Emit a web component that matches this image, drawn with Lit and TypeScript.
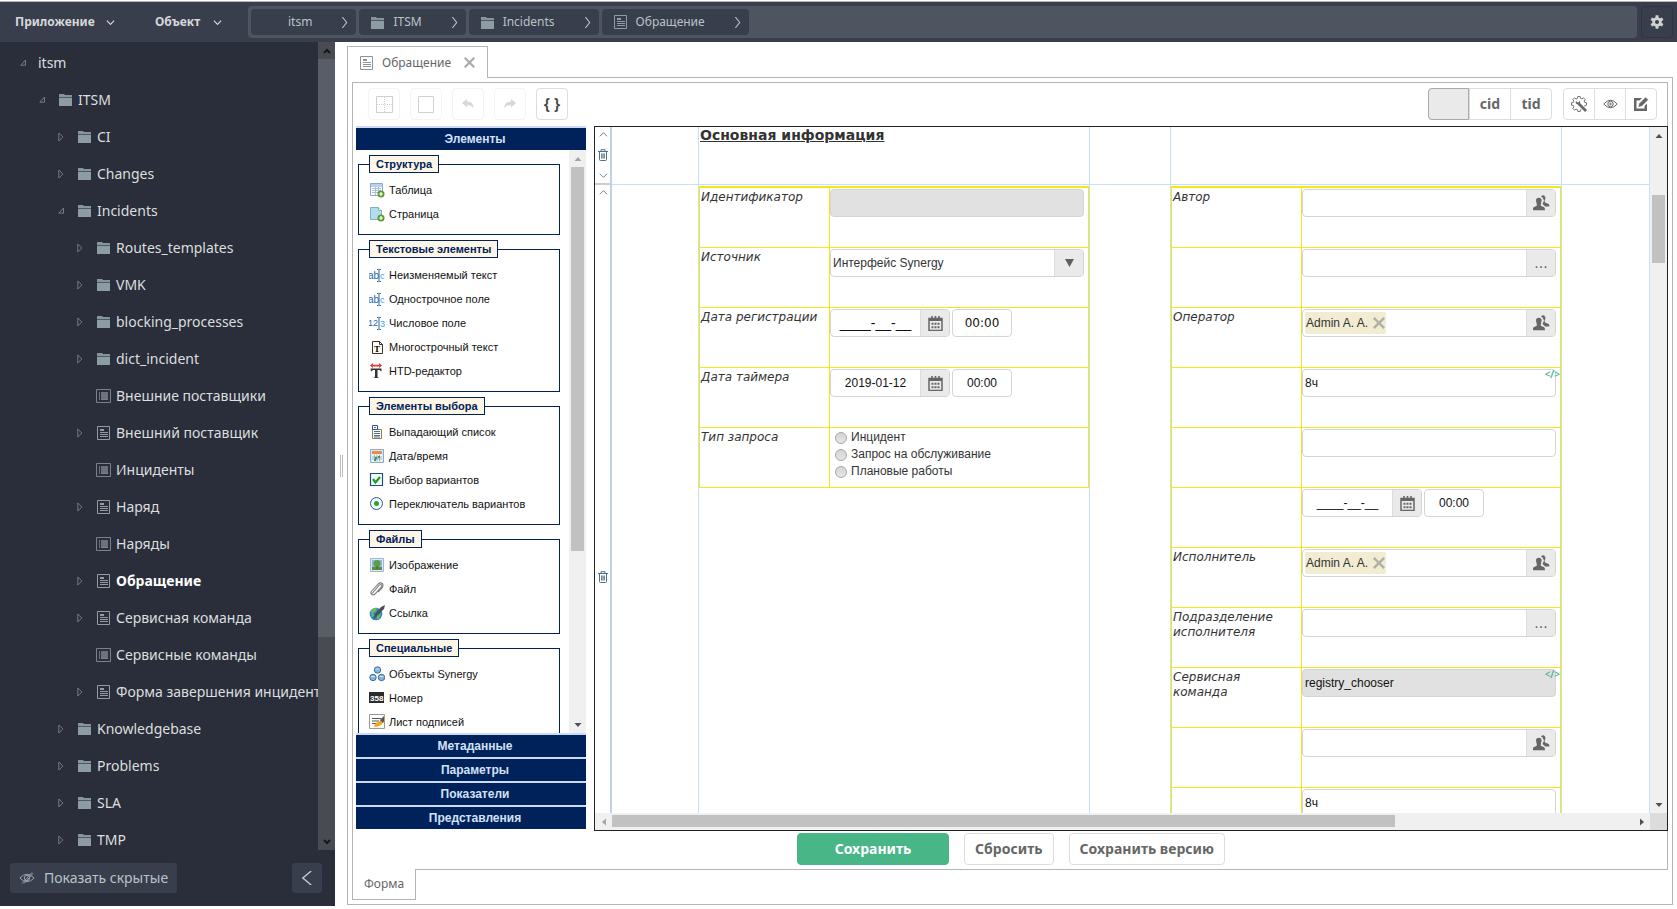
import { LitElement, html, svg, css, nothing, TemplateResult } from "lit";
import { customElement } from "lit/decorators.js";
import { classMap } from "lit/directives/class-map.js";

type TreeKind = "root" | "folder" | "form" | "list";
interface TreeNode { label: string; depth: number; kind: TreeKind; open?: boolean; leaf?: boolean; current?: boolean; }
type Control = "disabled" | "select" | "dateWide" | "date" | "dateEmpty" | "radios" | "user" | "userChip" | "more" | "code" | "text" | "codeDisabled";
interface FormRow { label: string; control: Control; value?: string; }

/** Outline of a cog wheel centred on (c, c). */
const cog = (teeth: number, outer: number, inner: number, c: number) => {
  const step = (Math.PI * 2) / teeth;
  const at = (r: number, a: number) => `${(c + r * Math.cos(a)).toFixed(2)} ${(c + r * Math.sin(a)).toFixed(2)}`;
  return Array.from({ length: teeth }, (_, i) => {
    const a = i * step - Math.PI / 2;
    return `${i ? "L" : "M"}${at(inner, a - step * 0.32)}L${at(outer, a - step * 0.2)}L${at(outer, a + step * 0.2)}L${at(inner, a + step * 0.32)}`;
  }).join("") + "z";
};

const folderIcon = html`<svg class="ico" width="14" height="13" viewBox="0 0 14 13"><path d="M0 1h5l1 1h7v2H0z" fill="#86959b"/><path d="M0 4.500h13V13H0z" fill="#8d9ca2"/><path d="M0 4h13v1H0z" fill="#4d5a62"/></svg>`;
const formIcon = (c: string) => html`<svg class="ico" width="14" height="14" viewBox="0 0 14 14" fill="none" stroke=${c}><path d="M.5.5h12v13H.5z"/><path d="M3 3.500h4M3 4.500h4M3 6.500h8M3 8.500h8M3 10.500h8"/></svg>`;
const listIcon = html`<svg class="ico" width="16" height="14" viewBox="0 0 16 14"><path d="M.5.5h14v13H.5z" fill="none" stroke="#7a818b"/><path d="M3 3h1v8H3zM5 3h7v7H5z" fill="#6b727d"/><path d="M5 10.500h7" stroke="#7a818b"/></svg>`;
const chevron = (dir: "down" | "right" | "left" | "up", w = 8, sw = 1) => {
  const d = { down: "M1 3l4 4 4-4", up: "M1 7l4-4 4 4", right: "M3 0l4 5-4 5", left: "M8 0L2 5l6 5" }[dir];
  return html`<svg width=${w} height=${w} viewBox="0 0 10 10" fill="none" stroke="currentColor" stroke-width=${sw}><path d=${d}/></svg>`;
};
const toggleClosed = html`<svg width="6" height="10" viewBox="0 0 6 10"><path d="M.8 1l4 4-4 4z" fill="none" stroke="#737b88"/></svg>`;
const toggleOpen = html`<svg width="7" height="7" viewBox="0 0 7 7"><path d="M5.500 1v5.200H.8z" fill="none" stroke="#737b88"/></svg>`;
const cross = (s: number, c: string) => html`<svg width=${s} height=${s} viewBox="0 0 10 10" stroke=${c} stroke-width="2"><path d="M.7.7l8.600 8.600M9.300.7L.7 9.300"/></svg>`;
const gear = html`<svg width="14" height="14" viewBox="0 0 14 14"><path d=${cog(6, 6.8, 4.8, 7) + "M9 7A2 2 0 1 0 5 7 2 2 0 1 0 9 7z"} fill="#d0d0d0" fill-rule="evenodd"/></svg>`;
const trash = html`<svg width="10" height="12" viewBox="0 0 10 12" fill="none" stroke="#4f7187"><path d="M0 2.500h10M3 2V.7h4V2M1.500 3v7.500q0 1 1 1h5q1 0 1-1V3M3.700 4.500v5M5 4.500v5M6.300 4.500v5"/></svg>`;
const eye = html`<svg width="15" height="10" viewBox="0 0 15 10" fill="none" stroke="#666"><path d="M.8 5Q7.500-2.600 14.200 5 7.500 12.600.8 5z"/><circle cx="7.500" cy="5" r="2.700"/><circle cx="7.500" cy="5" r=".8"/></svg>`;
const eyeOff = html`<svg width="16" height="12" viewBox="0 0 16 12" fill="none" stroke="#9aa1ab"><path d="M.8 6Q8-1.500 15.200 6 8 13.500.8 6zM3 11.500L13 .5M5 11.500L14 1.500"/><circle cx="8" cy="6" r="2.700"/></svg>`;
const toolGear = html`<svg width="17" height="17" viewBox="0 0 17 17" fill="none" stroke="#666"><path d=${cog(8, 7.6, 5.9, 8)} stroke-width=".9"/><path d="M8.500 8.500l6.500 6.500" stroke="#fff" stroke-width="4.500"/><path d="M7.500 7.500l7.500 7.500" stroke-width="2.600"/><path d="M5 4.800q-1 2.400.6 3.200 2 .8 3.200-.4 1-1.500-.1-3.100L8 6.200H6z" fill="#666" stroke="none"/></svg>`;
const editIcon = html`<svg width="15" height="14" viewBox="0 0 15 14"><path d="M0 1h8L5.500 3.500h-3v8h8V9L13 6.500V14H0z" fill="#666"/><path d="M4 10.500l1-4L11.500 0l3 2.700L8 9.300z" fill="#666" stroke="#fff" stroke-width=".6"/></svg>`;
const people = html`<svg width="17" height="16" viewBox="0 0 17 16" fill="#666"><path d="M8 1.500Q10-.8 12 1.500q1 2-.5 4.500l.6 1.600 3.500 1.500q1 1 .7 2.400h-4L9.500 9 11 5.500 9.500 2.500z"/><path d="M3 5.500Q3 2.800 5.800 2.800T8.600 5.500L7.800 9.500v1.300l3.400 1.500q.8.600.8 3H-.3q0-2.400.9-3l3.200-1.500V9.500z"/></svg>`;
const calendar = html`<svg width="15" height="15" viewBox="0 0 15 15"><path d="M1 2.500h13v12H1z" fill="none" stroke="#666" stroke-width="1.500"/><path d="M1 2h13v3H1z" fill="#666"/><path d="M4 0v3.500M11 0v3.500M7.500 0v3" stroke="#666" stroke-width="1.600"/><path d="M3.500 7.800h8M3.500 11.300h8" stroke="#666" stroke-width="2" stroke-dasharray="2 1"/></svg>`;

const plus = svg`<circle cx="12" cy="12" r="3.500" fill="#5c9a2c"/><path d="M12 10v4M10 12h4" stroke="#fff" stroke-width="1.200"/>`;
const pic = (body: TemplateResult) => html`<svg width="16" height="16" viewBox="0 0 16 16" font-family="Liberation Sans, sans-serif">${body}</svg>`;
const icons: Record<string, TemplateResult> = {
  table: pic(svg`<path d="M1.500 1.500h12v12h-12z" fill="#fff" stroke="#86a8d8"/><path d="M2 2h11v3H2z" fill="#b9d1f0"/><path d="M3 6.500h9M3 8.500h9M3 10.500h9M6.500 5v8M9.500 5v8" stroke="#a9bfdd"/>${plus}`),
  page: pic(svg`<path d="M1.500 1.500h8l3 3v9h-11z" fill="#b5dcea" stroke="#7ab3cc"/><path d="M9.500 1.500v3h3" fill="#fff" stroke="#7ab3cc"/>${plus}`),
  abc: pic(svg`<text x="-1" y="12" font-size="10" fill="#2a64ad">ab</text><path d="M8 2.500h1.500l.5.500.5-.5H12M8 14.500h1.500l.5-.5.5.5H12M10 3v11" fill="none" stroke="#2d6a9c"/><text x="11" y="12" font-size="9" fill="#37a3ee">c</text>`),
  num: pic(svg`<text x="-1" y="11" font-size="9" fill="#2a64ad">12</text><path d="M8 2.500h1.500l.5.500.5-.5H12M8 14.500h1.500l.5-.5.5.5H12M10 3v11" fill="none" stroke="#2d6a9c"/><text x="11" y="12" font-size="9" fill="#37a3ee">3</text>`),
  multi: pic(svg`<path d="M3.500 2.500h7l3 3v9h-10z" fill="#fffdf2" stroke="#333"/><path d="M10.500 2.500v3h3" fill="none" stroke="#333"/><text x="5" y="12.500" font-size="9" font-weight="bold" font-family="Liberation Serif, serif">T</text>`),
  htd: pic(svg`<path d="M1 2.500L4 0v1.700h6V0l3 2.500L10 5V3.500H4V5z" fill="#e53a32"/><path d="M1.500 5.500h11v3l-2-1.500H8.500v7l1.500 1H4.500l1.500-1V7h-2l-2 1.500z" fill="#333"/>`),
  drop: pic(svg`<path d="M3.500 5.500h9v9h-9z" fill="#fffbe8" stroke="#8c7f56"/><path d="M3.500 1.500h5v4h-5z" fill="#fff" stroke="#33527e"/><path d="M5 3.500h2M5 7.500h6M5 9.500h6M5 11.500h6M5 13h6" stroke="#4a6da0"/>`),
  date: pic(svg`<path d="M1.500 1.500h13v13h-13z" fill="#dbe8f6" stroke="#8aabd6"/><path d="M3 3h10v3H3z" fill="#f08a45"/><path d="M3 7h10v6H3z" fill="#fff"/><path d="M3 9h10M3 11h10M5.500 7v6M8 7v6M10.500 7v6" stroke="#9ab"/><path d="M6 9h2v2H6zM9 8h2v2H9zM5 11h2v2H5z" fill="#3f9a4b"/>`),
  check: pic(svg`<path d="M1.500 1.500h12v12h-12z" fill="#f6fbff" stroke="#1d4f7c" stroke-width="1.200"/><path d="M4 7l2.500 3.500L11 5" fill="none" stroke="#17a017" stroke-width="2.200"/>`),
  radio: pic(svg`<circle cx="7.500" cy="7.500" r="6" fill="#f3faff" stroke="#2d5d86"/><circle cx="7.500" cy="7.500" r="2.500" fill="#2aa52a"/>`),
  image: pic(svg`<path d="M1.500 1.500h13v13h-13z" fill="#dfe8f4" stroke="#9eb7d8"/><path d="M3 3h10v10H3z" fill="#8db9ea"/><path d="M3 10h10v3H3z" fill="#57903c"/><circle cx="8" cy="6.500" r="3.500" fill="#5f9e3e"/><path d="M7.500 9h1v3h-1z" fill="#6b4d2c"/>`),
  file: pic(svg`<path d="M3 12.500L10.500 4q1.500-1 2.300.2.600 1-.5 2L6 13q-2 1.600-3.500.3-1.400-1.500.2-3.300L9.500 2.700q2-1.600 4 0 1.500 1.800 0 3.600L9 11" fill="none" stroke="#7d7d7d" stroke-width="1.100"/>`),
  link: pic(svg`<circle cx="7" cy="9" r="6.300" fill="#2c86dc"/><path d="M2 6q3-4 6-3l-1 3-3 2 1 3-2 1zM8 10l4-1-2 5-2 .5z" fill="#6cc04a"/><path d="M4 15L6 9 12 2l4-2-1 4-6 6z" fill="#4c4f54"/>`),
  objects: pic(svg`<g fill="#86b5db" stroke="#3a6e9c"><circle cx="8.500" cy="4" r="3.200"/><circle cx="4" cy="11.500" r="3.200"/><circle cx="12.500" cy="11.500" r="3.200"/></g><path d="M6.500 3h4M2 10.500h4M10.500 10.500h4" stroke="#cfe3f3"/>`),
  number: pic(svg`<path d="M0 2h15v11H0z" fill="#2b2b2b"/><text x="1" y="11" font-size="8" font-weight="bold" fill="#fff">358</text>`),
  sign: pic(svg`<path d="M.5.5h15v14H.5z" fill="#fff" stroke="#9a9a9a"/><path d="M3 4.500h9M3 7h7M3 9.500h5" stroke="#555"/><path d="M5 13q1-5 5-5l3-4 2.500-2v5L12 11q-3 2-7 2z" fill="#f2a71b"/><path d="M11 6l4-4v5l-1 2z" fill="#555"/>`),
};

const tree: TreeNode[] = [
  { label: "itsm", depth: 0, kind: "root", open: true },
  { label: "ITSM", depth: 1, kind: "folder", open: true },
  { label: "CI", depth: 2, kind: "folder" },
  { label: "Changes", depth: 2, kind: "folder" },
  { label: "Incidents", depth: 2, kind: "folder", open: true },
  { label: "Routes_templates", depth: 3, kind: "folder" },
  { label: "VMK", depth: 3, kind: "folder" },
  { label: "blocking_processes", depth: 3, kind: "folder" },
  { label: "dict_incident", depth: 3, kind: "folder" },
  { label: "Внешние поставщики", depth: 3, kind: "list", leaf: true },
  { label: "Внешний поставщик", depth: 3, kind: "form" },
  { label: "Инциденты", depth: 3, kind: "list", leaf: true },
  { label: "Наряд", depth: 3, kind: "form" },
  { label: "Наряды", depth: 3, kind: "list", leaf: true },
  { label: "Обращение", depth: 3, kind: "form", current: true },
  { label: "Сервисная команда", depth: 3, kind: "form" },
  { label: "Сервисные команды", depth: 3, kind: "list", leaf: true },
  { label: "Форма завершения инцидента", depth: 3, kind: "form" },
  { label: "Knowledgebase", depth: 2, kind: "folder" },
  { label: "Problems", depth: 2, kind: "folder" },
  { label: "SLA", depth: 2, kind: "folder" },
  { label: "TMP", depth: 2, kind: "folder" },
];

const palette: { title: string; items: [string, string][] }[] = [
  { title: "Структура", items: [["table", "Таблица"], ["page", "Страница"]] },
  { title: "Текстовые элементы", items: [["abc", "Неизменяемый текст"], ["abc", "Однострочное поле"], ["num", "Числовое поле"], ["multi", "Многострочный текст"], ["htd", "HTD-редактор"]] },
  { title: "Элементы выбора", items: [["drop", "Выпадающий список"], ["date", "Дата/время"], ["check", "Выбор вариантов"], ["radio", "Переключатель вариантов"]] },
  { title: "Файлы", items: [["image", "Изображение"], ["file", "Файл"], ["link", "Ссылка"]] },
  { title: "Специальные", items: [["objects", "Объекты Synergy"], ["number", "Номер"], ["sign", "Лист подписей"]] },
];

const leftRows: FormRow[] = [
  { label: "Идентификатор", control: "disabled" },
  { label: "Источник", control: "select", value: "Интерфейс Synergy" },
  { label: "Дата регистрации", control: "dateWide" },
  { label: "Дата таймера", control: "date", value: "2019-01-12" },
  { label: "Тип запроса", control: "radios" },
];
const rightRows: FormRow[] = [
  { label: "Автор", control: "user" },
  { label: "", control: "more" },
  { label: "Оператор", control: "userChip", value: "Admin A. A." },
  { label: "", control: "code", value: "8ч" },
  { label: "", control: "text" },
  { label: "", control: "dateEmpty" },
  { label: "Исполнитель", control: "userChip", value: "Admin A. A." },
  { label: "Подразделение исполнителя", control: "more" },
  { label: "Сервисная команда", control: "codeDisabled", value: "registry_chooser" },
  { label: "", control: "user" },
  { label: "", control: "text", value: "8ч" },
];

const base = css`
  :host, *, *::before, *::after { box-sizing: border-box; }
  button, input, select { font: inherit; color: inherit; margin: 0; padding: 0; border: 0; background: none; }
  button { cursor: pointer; }
  svg { display: block; flex: none; }
`;

/** Decorative scroll bar: arrow, track with a thumb, arrow. */
@customElement("scroll-track")
class ScrollTrack extends LitElement {
  static properties = { start: { type: Number }, size: { type: Number }, horizontal: { type: Boolean, reflect: true }, dark: { type: Boolean, reflect: true }, attop: { type: Boolean } };
  declare start: number; declare size: number; declare horizontal: boolean; declare dark: boolean; declare attop: boolean;
  static styles = css`
    :host { display: flex; flex-direction: column; width: 17px; background: #f0f0f0; }
    :host([horizontal]) { flex-direction: row; width: auto; height: 17px; }
    :host([dark]) { background: #484b52; }
    .end { flex: none; width: 17px; height: 17px; display: grid; place-items: center; }
    .track { flex: 1; min-height: 0; position: relative; }
    .thumb { position: absolute; left: 2px; right: 2px; background: #c1c1c1; }
    :host([horizontal]) .thumb { left: auto; right: auto; top: 2px; bottom: 3px; }
    :host([dark]) .thumb { left: 0; right: 0; background: #585d67; }
    svg { display: block; }
  `;
  render() {
    const style = this.horizontal ? `left:${this.start}%;width:${this.size}%` : `top:${this.start}%;height:${this.size}%`;
    const mark = (d: string, c: string) => this.dark
      ? html`<svg width="8" height="8" viewBox="0 0 8 8" fill="none" stroke="#15171b" stroke-width="2"><path d=${d}/></svg>`
      : html`<svg width="8" height="8" viewBox="0 0 8 8" fill=${c}><path d=${d + "z"}/></svg>`;
    const a = this.dark ? "M1 6l3-3 3 3" : this.horizontal ? "M6 0.500v7L2 4" : "M0.500 6h7L4 2";
    const b = this.dark ? "M1 2l3 3 3-3" : this.horizontal ? "M2 0.500v7L6 4" : "M0.500 2h7L4 6";
    return html`<span class="end">${mark(a, this.attop ? "#a3a3a3" : "#505050")}</span>
      <span class="track"><span class="thumb" style=${style}></span></span>
      <span class="end">${mark(b, "#505050")}</span>`;
  }
}

/** Two-column form block placed in a cell of the designer sheet. */
@customElement("form-grid")
class FormGrid extends LitElement {
  static properties = { rows: { attribute: false }, prefix: { type: String } };
  declare rows: FormRow[]; declare prefix: string;
  static styles = [base, css`
    :host { display: block; border: 1px solid #f2ea12; border-top-width: 2px; font: 12px/15px "Liberation Sans", Arial, sans-serif; color: #333; }
    .row { display: grid; grid-template-columns: 130px minmax(0, 1fr); height: 60px; border-bottom: 1px solid #f2ea12; }
    .row:last-child { height: 59px; border-bottom: 0; }
    .name { border-right: 1px solid #f2ea12; padding: 2px 8px 0 1px; font: italic 12px/15px "DejaVu Sans", Verdana, sans-serif; }
    .value { position: relative; padding: 1px 4px 0 0; }
    .field { display: flex; height: 28px; border: 1px solid #d5d5d5; border-radius: 4px; background: #fff; overflow: hidden; color: #111; }
    .field.off { background: #e1e1e1; }
    .field input, .field select { flex: 1; min-width: 0; width: 100%; height: 100%; padding: 0 2px; outline: 0; }
    .field select { appearance: none; color: #333; }
    .side { flex: none; width: 29px; display: grid; place-items: center; background: #eaeaea; border-left: 1px solid #ddd; color: #666; }
    .dots { font-size: 16px; line-height: 20px; }
    .caret { pointer-events: none; }
    .chip { flex: none; align-self: center; display: flex; align-items: center; gap: 5px; height: 22px; margin-left: 2px; padding: 0 1px; background: #f1ecd2; border-radius: 2px; color: #333; }
    .dates { display: flex; gap: 2px; }
    .dates .date { width: 120px; }
    .dates .time { width: 60px; }
    .dates input { text-align: center; }
    .big { font-size: 14px; }
    .verdana { font-family: "DejaVu Sans", Verdana, sans-serif; }
    .tag { position: absolute; top: 0; right: 0; font: 10px/12px "Open Sans", sans-serif; font-weight: 600; color: #3fae8a; }
    .opt { display: flex; align-items: center; gap: 4px; height: 17px; padding-left: 5px; }
    .opt input { appearance: none; width: 12px; height: 12px; border: 1px solid #a8a8a8; border-radius: 50%; background: linear-gradient(#d4d4d4, #e6e6e6); }
  `];
  private control(r: FormRow, id: string) {
    const aria = r.label || "Значение";
    const input = (v = "", cls = "", off = false) => html`<input id=${id} class=${cls} type="text" aria-label=${aria} .value=${v} ?readonly=${off}>`;
    const users = html`<button class="side" aria-label="Выбрать пользователя">${people}</button>`;
    const dates = (v: string, wide: boolean) => html`<div class="dates">
      <div class="field date">${input(v, wide ? "big" : "")}<button class="side" aria-label="Календарь">${calendar}</button></div>
      <div class="field time"><input class=${wide ? "verdana" : ""} type="text" aria-label="Время" .value=${"00:00"}></div></div>`;
    const tag = html`<span class="tag">&lt;/&gt;</span>`;
    switch (r.control) {
      case "disabled": return html`<div class="field off">${input("", "", true)}</div>`;
      case "select": return html`<div class="field"><select id=${id}><option>${r.value}</option></select><span class="side caret"><svg width="9" height="8" viewBox="0 0 9 8"><path d="M0 0h9L4.500 8z" fill="#606060"/></svg></span></div>`;
      case "dateWide": return dates("____-__-__", true);
      case "dateEmpty": return dates("____-__-__", false);
      case "date": return dates(r.value ?? "", false);
      case "radios": return html`<div>${["Инцидент", "Запрос на обслуживание", "Плановые работы"].map(o => html`<label class="opt"><input type="radio" name=${id}>${o}</label>`)}</div>`;
      case "user": return html`<div class="field">${input()}${users}</div>`;
      case "userChip": return html`<div class="field"><span class="chip">${r.value}${cross(12, "#b0b0a4")}</span>${input()}${users}</div>`;
      case "more": return html`<div class="field">${input()}<button class="side dots" aria-label="Выбрать">...</button></div>`;
      case "code": return html`<div class="field">${input(r.value)}</div>${tag}`;
      case "codeDisabled": return html`<div class="field off">${input(r.value, "", true)}</div>${tag}`;
      default: return html`<div class="field">${input(r.value)}</div>`;
    }
  }
  render() {
    return this.rows.map((r, i) => {
      const id = `${this.prefix}-${i}`;
      return html`<div class="row">${r.label ? html`<label class="name" for=${id}>${r.label}</label>` : html`<span class="name"></span>`}<div class="value">${this.control(r, id)}</div></div>`;
    });
  }
}

@customElement("app-root")
class AppRoot extends LitElement {
  static styles = [base, css`
    :host { display: flex; flex-direction: column; height: 100vh; min-height: 500px; padding: 1px 0 3px; background: #fff; overflow: hidden; font-family: "Noto Sans", sans-serif; font-size: 14px; line-height: 20px; color: #666; }
    .top { flex: none; display: flex; align-items: center; height: 41px; padding: 0 4px 0 0; background: #383e4b; border-top: 1px solid #b8b8b8; color: #d6d8dc; }
    .menu { display: flex; align-items: center; justify-content: space-between; height: 32px; margin-left: 15px; font-size: 12px; font-weight: bold; }
    .menu.app { width: 100px; }
    .menu.obj { width: 67px; margin-left: 40px; }
    .crumbs { flex: 1; display: flex; gap: 3px; height: 32px; margin: 0 4px 0 26px; padding: 3px; background: #4f5560; border-radius: 4px; }
    .crumb { display: flex; align-items: center; height: 26px; padding: 0 6px 0 12px; background: #383e4b; border-radius: 4px; color: #b9c3c9; font-size: 12px; text-decoration: none; }
    .crumb .txt { margin: 0 27px 0 8px; }
    .crumb.first { padding-left: 29px; }
    .gear { display: grid; place-items: center; width: 32px; height: 32px; border: 1px solid #2f343f; border-radius: 4px; }
    .body { flex: 1; min-height: 0; display: flex; }
    .side { flex: none; width: 335px; display: flex; flex-direction: column; background: #292e3a; }
    .nav { flex: 1; min-height: 0; display: flex; }
    .tree { flex: 1; min-width: 0; margin: 0; padding: 2px 0 0; overflow: hidden; list-style: none; }
    .node { display: flex; align-items: center; width: 100%; height: 37px; white-space: nowrap; color: #dcdedf; text-align: left; }
    .node .tg { flex: none; width: 20px; }
    .node .ic { flex: none; width: 19px; }
    .node.root .tg { width: 18px; }
    .node.current { color: #fff; font-weight: bold; }
    .node.list .ico { margin-left: -1px; }
    .foot { flex: none; display: flex; justify-content: space-between; align-items: center; height: 56px; padding: 0 13px 0 10px; }
    .hidden-btn { display: flex; align-items: center; gap: 9px; height: 30px; padding: 0 9px; background: #383e4b; border-radius: 3px; color: #b9c3c9; }
    .fold { display: grid; place-items: center; width: 30px; height: 30px; background: #383e4b; border-radius: 3px; color: #c5c8cc; }
    .split { flex: none; width: 12px; display: flex; align-items: center; padding: 0 0 16px 5px; }
    .split::before { content: ""; width: 3px; height: 22px; border: solid #bbb; border-width: 0 1px; }
    .main { flex: 1; min-width: 0; display: flex; flex-direction: column; padding: 4px 4px 1px 0; }
    .tab { flex: none; align-self: flex-start; display: flex; align-items: center; height: 32px; margin-bottom: -1px; padding: 0 12px; border: 1px solid #b5b5b5; border-bottom: 0; background: #fff; z-index: 1; font-size: 12px; }
    .tab .txt { margin: 0 13px 0 8px; }
    .outer { flex: 1; min-height: 0; display: flex; flex-direction: column; padding: 4px; border: 1px solid #b5b5b5; }
    .inner { flex: 1; min-height: 0; display: flex; flex-direction: column; border: 1px solid #b5b5b5; }
    .bar { flex: none; display: flex; gap: 10px; padding: 5px 10px 6px 15px; }
    .tool { display: grid; place-items: center; width: 32px; height: 32px; border: 1px solid #ddd; border-radius: 4px; }
    .tool:disabled { border-color: #f4f4f4; }
    .braces { color: #444; font-size: 16px; font-weight: 600; line-height: 20px; }
    .seg { display: flex; border: 1px solid #ddd; border-radius: 4px; height: 32px; font-weight: bold; }
    .seg.first { margin: 0 1px 0 auto; }
    .seg button { width: 41px; display: grid; place-items: center; border-left: 1px solid #ddd; }
    .seg button:first-child { border-left: 0; }
    .seg .on { margin: -1px 0; background: #eaeaea; border: 1px solid #aaa; border-radius: 4px 0 0 4px; }
    .seg .on:first-child { border-left: 1px solid #aaa; margin-left: -1px; }
    .seg.icons button { width: 31px; }
    .seg.icons button:first-child { width: 30px; }
    .work { flex: 1; min-height: 0; display: flex; gap: 8px; padding-left: 3px; }
    .pal { flex: none; width: 230px; display: flex; flex-direction: column; padding-bottom: 2px; font: 11px/16px "Liberation Sans", Arial, sans-serif; color: #111; }
    .acc { flex: none; height: 24px; width: 100%; padding-left: 8px; border-top: 2px solid #ccdaf5; background: #00225a; color: #d3e1f8; font-size: 12px; font-weight: bold; text-align: center; }
    .palbody { flex: 1; min-height: 0; display: flex; justify-content: space-between; }
    .groups { width: 204px; overflow: hidden; padding-left: 2px; }
    .group { margin: 5px 0 0; padding: 5px 10px 8px; border: 1px solid #00225a; min-width: 0; }
    .group legend { padding: 0 6px; border: 1px solid #00225a; background: #fdf5e6; color: #00225a; font-weight: bold; }
    .item { display: flex; align-items: center; gap: 4px; height: 24px; white-space: nowrap; }
    .canvas { flex: 1; min-width: 0; display: grid; grid-template: minmax(0, 1fr) 17px / minmax(0, 1fr) 17px; margin-right: -1px; border: 1px solid #222; background: #fff; z-index: 1; }
    .view { overflow: hidden; }
    .corner { background: #dcdcdc; }
    .line { display: grid; grid-template-columns: 17px 87fr 391fr 81fr 391fr 88fr; height: 58px; }
    .line.tall { height: 785px; }
    .cell { border: solid #c5e0fb; border-width: 0 1px 1px 0; min-width: 0; }
    .ctl { display: flex; flex-direction: column; justify-content: space-between; align-items: center; padding: 3px 0 3px 1px; border-right: 2px solid #bcd3ea; border-bottom: 2px solid #ccc; color: #4f7187; background: #fff; }
    .title { margin: 0; font: bold 14px/17px "DejaVu Sans", Verdana, sans-serif; color: #333; text-decoration: underline; padding-left: 1px; }
    form-grid { margin-top: 1px; }
    .actions { flex: none; display: flex; justify-content: center; gap: 15px; padding: 2px 0 4px 2px; }
    .act { height: 32px; padding: 0 10px; border: 1px solid #ddd; border-radius: 4px; font-weight: bold; }
    .act.save { width: 152px; background: #49b688; border-color: #49b688; color: #fff; }
    .btab { flex: none; align-self: flex-start; height: 31px; margin-top: -1px; padding: 0 11px; border: 1px solid #b5b5b5; border-top: 0; background: #fff; font-size: 12px; z-index: 1; }
  `];

  private node(n: TreeNode) {
    return html`<li><button class=${classMap({ node: true, root: n.kind === "root", list: n.kind === "list", current: !!n.current })} style=${`padding-left:${20 + n.depth * 19}px`}>
      <span class="tg">${n.leaf ? nothing : n.open ? toggleOpen : toggleClosed}</span>
      ${n.kind === "root" ? nothing : html`<span class="ic">${n.kind === "folder" ? folderIcon : n.kind === "form" ? formIcon("#959ba3") : listIcon}</span>`}
      <span>${n.label}</span></button></li>`;
  }

  private line(tall: boolean) {
    return html`<div class=${classMap({ line: true, tall })}>
      <div class="ctl"><button aria-label="Вверх">${chevron("up", 9)}</button><button aria-label="Удалить строку">${trash}</button><button aria-label="Вниз">${chevron("down", 9)}</button></div>
      <div class="cell"></div>
      <div class="cell">${tall ? html`<form-grid prefix="l" .rows=${leftRows}></form-grid>` : html`<h2 class="title">Основная информация</h2>`}</div>
      <div class="cell"></div>
      <div class="cell">${tall ? html`<form-grid prefix="r" .rows=${rightRows}></form-grid>` : nothing}</div>
      <div class="cell"></div></div>`;
  }

  render() {
    const crumb = (t: string, icon: unknown, first = false) => html`<a href="#" class=${classMap({ crumb: true, first })}>${icon}<span class="txt">${t}</span>${chevron("right", 11)}</a>`;
    return html`
      <header class="top">
        <button class="menu app">Приложение ${chevron("down", 9, 1.3)}</button>
        <button class="menu obj">Объект ${chevron("down", 9, 1.3)}</button>
        <nav class="crumbs">${crumb("itsm", nothing, true)}${crumb("ITSM", folderIcon)}${crumb("Incidents", folderIcon)}${crumb("Обращение", formIcon("#8d9ca2"))}</nav>
        <button class="gear" aria-label="Настройки">${gear}</button>
      </header>
      <div class="body">
        <aside class="side">
          <div class="nav"><ul class="tree">${tree.map(n => this.node(n))}</ul><scroll-track dark .start=${0} .size=${74.7}></scroll-track></div>
          <div class="foot"><button class="hidden-btn">${eyeOff}Показать скрытые</button><button class="fold" aria-label="Свернуть">${chevron("left", 14)}</button></div>
        </aside>
        <div class="split"></div>
        <main class="main">
          <div class="tab">${formIcon("#8d9499")}<span class="txt">Обращение</span><button aria-label="Закрыть">${cross(11, "#aaa")}</button></div>
          <section class="outer">
            <div class="inner">
              <div class="bar">
                <button class="tool" disabled aria-label="Разделить"><svg width="17" height="17" viewBox="0 0 17 17" fill="none" stroke="#d0d0d0"><path d="M.5.5h16v16H.5z"/><path d="M8.500 1v15M1 8.500h15" stroke-dasharray="1 1"/></svg></button>
                <button class="tool" disabled aria-label="Объединить"><svg width="16" height="17" viewBox="0 0 16 17" fill="none" stroke="#d0d0d0"><path d="M.5.5h15v16H.5z"/></svg></button>
                <button class="tool" disabled aria-label="Отменить"><svg width="12" height="11" viewBox="0 0 12 11"><path d="M0 4l5-4v2.500q6.500 0 6.700 7-2-3.500-6.700-3.500V8.500z" fill="#d8d8d8"/></svg></button>
                <button class="tool" disabled aria-label="Вернуть"><svg width="12" height="11" viewBox="0 0 12 11"><path d="M12 4L7 0v2.500Q.5 2.500.3 9.500 2.300 6 7 6v2.500z" fill="#d8d8d8"/></svg></button>
                <button class="tool braces">{ }</button>
                <div class="seg first"><button class="on" aria-label="Без идентификаторов"></button><button>cid</button><button>tid</button></div>
                <div class="seg icons"><button aria-label="Инструменты">${toolGear}</button><button aria-label="Просмотр">${eye}</button><button aria-label="Редактировать">${editIcon}</button></div>
              </div>
              <div class="work">
                <div class="pal">
                  <button class="acc">Элементы</button>
                  <div class="palbody">
                    <div class="groups">${palette.map(g => html`<fieldset class="group"><legend>${g.title}</legend>${g.items.map(([i, t]) => html`<div class="item">${icons[i]}${t}</div>`)}</fieldset>`)}</div>
                    <scroll-track attop .start=${0} .size=${70}></scroll-track>
                  </div>
                  ${["Метаданные", "Параметры", "Показатели", "Представления"].map(t => html`<button class="acc">${t}</button>`)}
                </div>
                <div class="canvas">
                  <div class="view">${this.line(false)}${this.line(true)}</div>
                  <scroll-track .start=${7.8} .size=${10.4}></scroll-track>
                  <scroll-track horizontal attop .start=${0} .size=${76.7}></scroll-track>
                  <div class="corner"></div>
                </div>
              </div>
              <div class="actions"><button class="act save">Сохранить</button><button class="act">Сбросить</button><button class="act">Сохранить версию</button></div>
            </div>
            <button class="btab">Форма</button>
          </section>
        </main>
      </div>`;
  }
}
